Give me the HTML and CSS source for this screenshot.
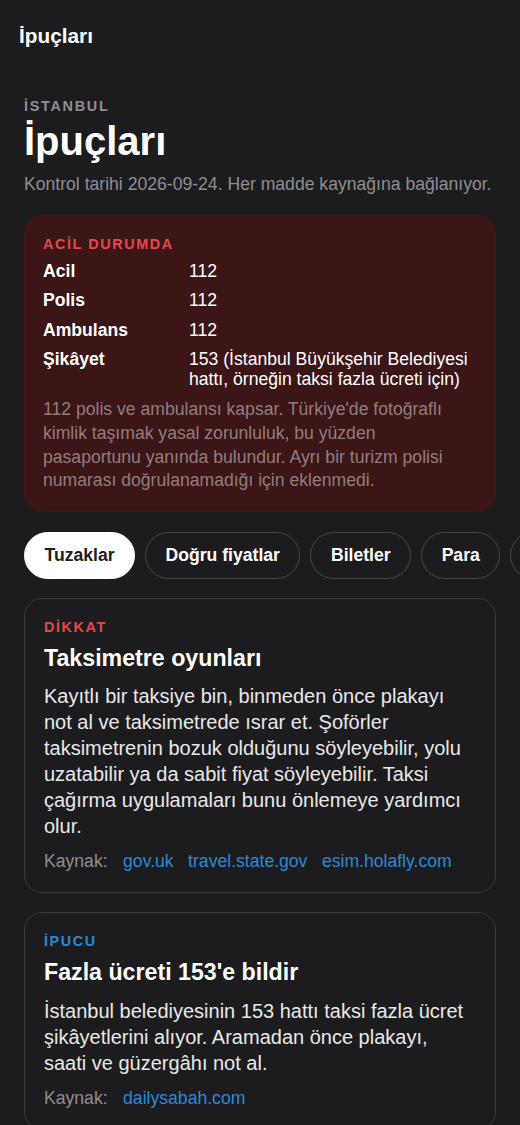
FILE: index.html
```html
<!doctype html>
<html lang="tr">
  <head>
    <meta charset="utf-8">
    <meta name="viewport" content="width=device-width, initial-scale=1">
    <title>İpuçları</title>
    <link rel="stylesheet" href="styles.css">
  </head>
  <body>
    <header class="topbar">İpuçları</header>

    <main class="page">
      <div class="hero">
        <div class="eyebrow">İstanbul</div>
        <h1>İpuçları</h1>
        <p class="checked">Kontrol tarihi 2026-09-24. Her madde kaynağına bağlanıyor.</p>
      </div>

      <section class="emergency">
        <div class="tag tag-red">Acil durumda</div>
        <dl class="numbers">
          <dt>Acil</dt><dd>112</dd>
          <dt>Polis</dt><dd>112</dd>
          <dt>Ambulans</dt><dd>112</dd>
          <dt>Şikâyet</dt><dd>153 (İstanbul Büyükşehir Belediyesi hattı, örneğin taksi fazla ücreti için)</dd>
        </dl>
        <p class="note">112 polis ve ambulansı kapsar. Türkiye'de fotoğraflı kimlik taşımak yasal zorunluluk, bu yüzden pasaportunu yanında bulundur. Ayrı bir turizm polisi numarası doğrulanamadığı için eklenmedi.</p>
      </section>

      <nav class="chips">
        <button class="chip active">Tuzaklar</button>
        <button class="chip">Doğru fiyatlar</button>
        <button class="chip">Biletler</button>
        <button class="chip">Para</button>
        <button class="chip">Ulaşım</button>
      </nav>

      <article class="card">
        <div class="tag tag-red">Dikkat</div>
        <h2>Taksimetre oyunları</h2>
        <p>Kayıtlı bir taksiye bin, binmeden önce plakayı not al ve taksimetrede ısrar et. Şoförler taksimetrenin bozuk olduğunu söyleyebilir, yolu uzatabilir ya da sabit fiyat söyleyebilir. Taksi çağırma uygulamaları bunu önlemeye yardımcı olur.</p>
        <div class="sources">
          <span>Kaynak:</span>
          <a href="#">gov.uk</a>
          <a href="#">travel.state.gov</a>
          <a href="#">esim.holafly.com</a>
        </div>
      </article>

      <article class="card">
        <div class="tag tag-blue">İpucu</div>
        <h2>Fazla ücreti 153'e bildir</h2>
        <p>İstanbul belediyesinin 153 hattı taksi fazla ücret şikâyetlerini alıyor. Aramadan önce plakayı, saati ve güzergâhı not al.</p>
        <div class="sources">
          <span>Kaynak:</span>
          <a href="#">dailysabah.com</a>
        </div>
      </article>
    </main>
  </body>
</html>
```

FILE: styles.css
```css
* {
  box-sizing: border-box;
}

html,
body {
  margin: 0;
  padding: 0;
  background: #1c1c1e;
}
body {
  font-family: "Liberation Sans", Arial, sans-serif;
  color: #fff;
  font-size: 17.6px;
  line-height: 1.35;
  overflow-x: hidden;
  -webkit-font-smoothing: antialiased;
}

.topbar {
  padding: 22px 19px;
  font-size: 20.8px;
  line-height: 28px;
  font-weight: bold;
}

.page {
  padding: 25px 24px 40px;
}

.eyebrow {
  font-size: 14.4px;
  line-height: 18px;
  font-weight: bold;
  letter-spacing: 0.12em;
  text-transform: uppercase;
  color: #8e8e93;
}
h1 {
  margin: 4px 0 0;
  font-size: 40px;
  line-height: 44px;
  font-weight: bold;
}
.checked {
  margin: 9px 0 0;
  line-height: 24px;
  color: #8e8e93;
}

.tag {
  font-size: 14.4px;
  line-height: 18px;
  font-weight: bold;
  letter-spacing: 0.11em;
  text-transform: uppercase;
}
.tag-red {
  color: #e5484d;
}
.tag-blue {
  color: #2a8ad8;
}

.emergency {
  margin-top: 19px;
  padding: 19px 18px 18px;
  border: 1px solid #421719;
  border-radius: 18px;
  background: #3c1517;
}
.numbers {
  display: grid;
  grid-template-columns: 146px 1fr;
  row-gap: 9.6px;
  margin: 7.6px 0 0;
  line-height: 20px;
}
.numbers dt {
  font-weight: bold;
}
.numbers dd {
  margin: 0;
}
.note {
  margin: 8.6px 0 0;
  line-height: 23.76px;
  color: rgba(255, 255, 255, 0.45);
}

.chips {
  display: flex;
  gap: 10px;
  margin: 20px -24px 0;
  padding: 0 24px;
  overflow: hidden;
}
.chip {
  flex: none;
  margin: 0;
  padding: 11px 19.5px;
  border: 1px solid #48484a;
  border-radius: 999px;
  background: transparent;
  color: #fff;
  font-family: inherit;
  font-size: 17.6px;
  line-height: 23px;
  font-weight: bold;
}
.chip.active {
  background: #fff;
  border-color: #fff;
  color: #1c1c1e;
}

.card {
  margin-top: 19px;
  padding: 19px 22px 19px 19px;
  border: 1px solid #3a3a3c;
  border-radius: 18px;
}
.card h2 {
  margin: 8px 0 0;
  font-size: 23.2px;
  line-height: 29px;
  font-weight: bold;
}
.card p {
  margin: 10.4px 0 0;
  font-size: 20px;
  line-height: 26px;
  color: #e8e8ea;
}
.sources {
  display: flex;
  flex-wrap: wrap;
  gap: 0 14.5px;
  margin-top: 10px;
  line-height: 24px;
}
.sources span {
  color: #8e8e93;
  margin-right: 1px;
}
.sources a {
  color: #2a8ad8;
  text-decoration: none;
}
```
